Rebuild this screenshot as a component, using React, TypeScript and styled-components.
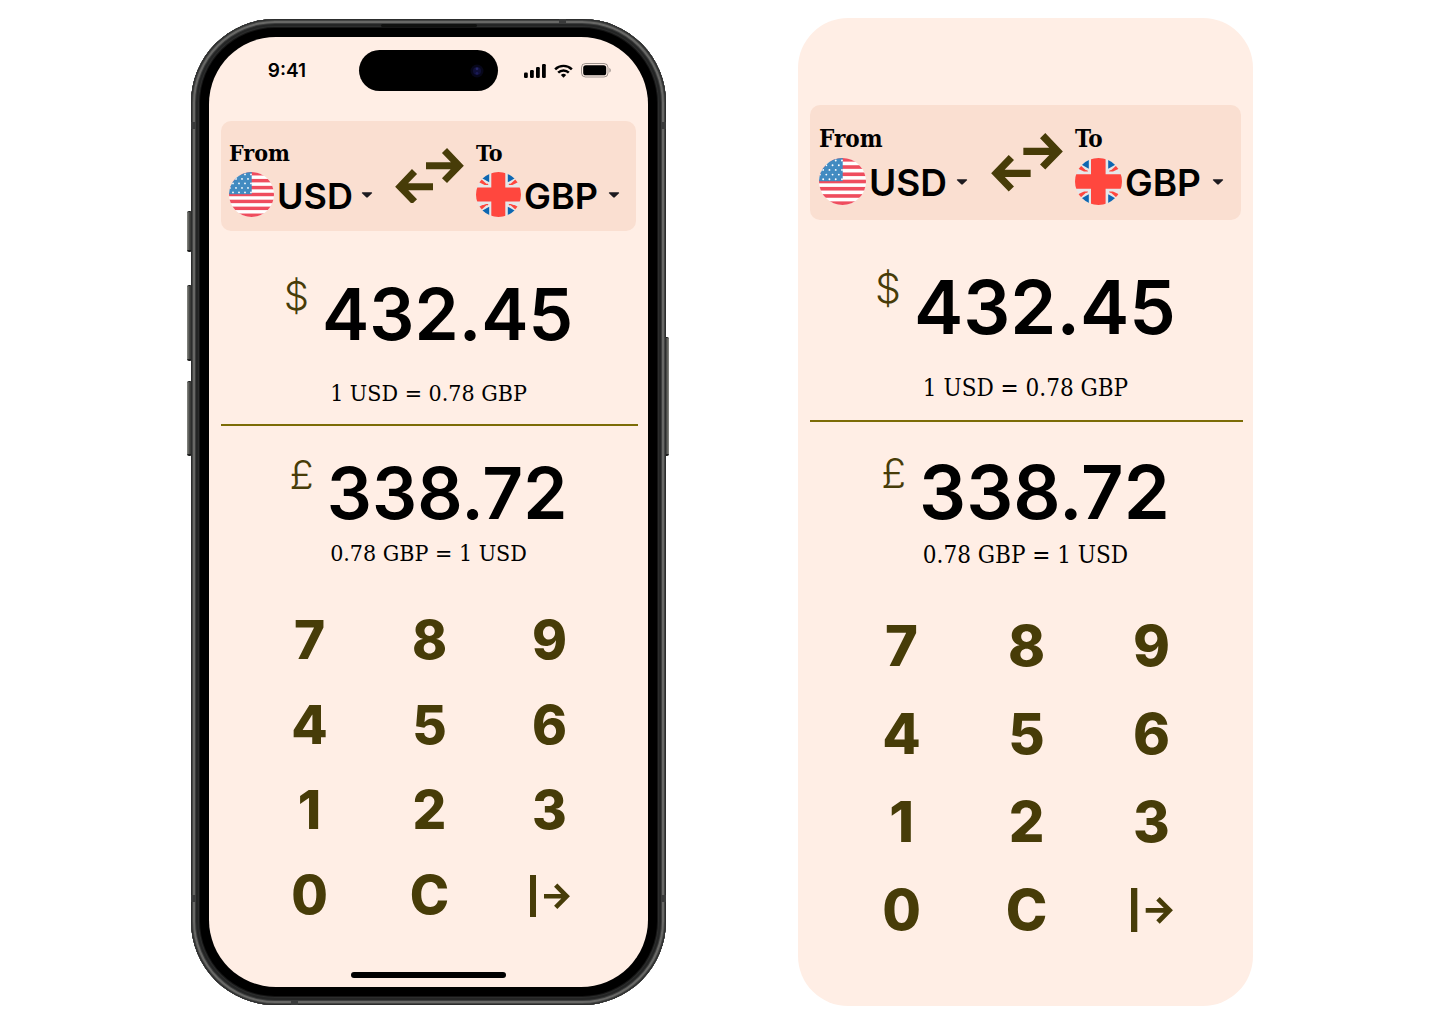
import React, { useId, useState } from 'react';
import styled, { createGlobalStyle, ThemeProvider } from 'styled-components';

const GlobalStyle = createGlobalStyle`
  *, *::before, *::after { box-sizing: border-box; }
  body { margin: 0; background: #fff; }
  button, select { font: inherit; color: inherit; border: 0; padding: 0; margin: 0; background: none; cursor: pointer; }
`;

const ink = '#473c08';
const blush = '#ffeee5';
const sans = `Inter, 'Liberation Sans', sans-serif`;
const slab = `'DejaVu Serif Condensed', 'Liberation Serif', serif`;

const compact = {
  cardPad: '18px 8px 14px',
  flag: 45, field: 144, code: 36, label: 23,
  swap: 69, swapMargin: '0 12px 5px 22px',
  amount: 71, amountLine: 72, symbol: 40, symbolLine: 36,
  rate: 23, rateLine: 28,
  firstTop: 47, firstRate: 29, secondTop: 31, keysTop: 31,
  key: 53, rowHeight: 85, colWidth: 120, exit: 40,
};

const roomy = {
  cardPad: '20px 9px 15px',
  flag: 47, field: 149, code: 37, label: 24,
  swap: 72, swapMargin: '0 12px 5px 23px',
  amount: 74, amountLine: 76, symbol: 41, symbolLine: 38,
  rate: 24, rateLine: 30,
  firstTop: 49, firstRate: 28, secondTop: 32, keysTop: 32,
  key: 56, rowHeight: 88, colWidth: 125, exit: 42,
};

const Page = styled.main`
  min-height: 100vh;
  display: flex;
  flex-wrap: wrap;
  align-items: center;
  justify-content: center;
  gap: 18px 129px;
  font-family: ${sans};
  color: #000;
`;

const Device = styled.div`
  position: relative;
  flex: 0 1 482px;
  padding: 0 3px 0 4px;
`;

const Body = styled.div`
  position: relative;
  padding: 18px;
  border-radius: 84px;
  background: #000;
  box-shadow:
    inset 0 0 0 1px #2c2d2d,
    inset 0 0 0 2px #434443,
    inset 0 0 0 4px #686866,
    inset 0 0 0 5px #3c3d3d,
    inset 0 0 0 7px #242525,
    inset 0 0 0 8px #2c2d2d,
    inset 0 0 0 9px #151515;
`;

const SideButton = styled.span<{ $side: 'left' | 'right'; $top: number; $length: number }>`
  position: absolute;
  ${(p) => p.$side}: 0;
  top: ${(p) => p.$top}px;
  width: 5px;
  height: ${(p) => p.$length}px;
  border-radius: 2px;
  background: linear-gradient(to ${(p) => (p.$side === 'left' ? 'right' : 'left')}, #8b8c86, #3a3b39 60%);
  border: solid #1d1e1d;
  border-width: 1px 0 2px;
`;

const Speaker = styled.span`
  position: absolute;
  top: 5px;
  left: 50%;
  width: 96px;
  height: 3px;
  margin-left: -48px;
  border-radius: 2px;
  background: #101110;
`;

const Antenna = styled.span<{ $place: string }>`
  position: absolute;
  ${(p) => p.$place}
  background: #3a3b3b;
`;

const Screen = styled.div`
  border-radius: 67px;
  background: ${blush};
  display: flex;
  flex-direction: column;
`;

const Panel = styled.div`
  flex: 0 1 455px;
  padding: 87px 0 52px;
  border-radius: 50px;
  background: ${blush};
`;

const StatusBar = styled.header`
  display: grid;
  grid-template-columns: 1fr 139px 1fr;
  align-items: center;
  padding: 13px 0 30px;
`;

const Time = styled.time`
  justify-self: center;
  padding-left: 6px;
  font-size: 19px;
  line-height: 24px;
  font-weight: 600;
`;

const Island = styled.div`
  height: 41px;
  border-radius: 21px;
  background: #000;
  display: flex;
  align-items: center;
  justify-content: flex-end;
  padding-right: 14px;
`;

const Indicators = styled.div`
  display: flex;
  align-items: center;
  gap: 8px;
  padding-left: 26px;
`;

const HomeBar = styled.div`
  width: 155px;
  height: 6px;
  margin: 34px auto 9px;
  border-radius: 3px;
  background: #000;
`;

const Card = styled.section`
  display: flex;
  align-items: center;
  margin: 0 12px;
  padding: ${(p) => p.theme.cardPad};
  border-radius: 10px;
  background: #fadfd1;
`;

const Field = styled.div`
  width: ${(p) => p.theme.field}px;
  display: flex;
  flex-direction: column;
  gap: 5px;
`;

const FieldLabel = styled.label`
  font-family: ${slab};
  font-size: ${(p) => p.theme.label}px;
  line-height: 28px;
  font-weight: 600;
`;

const Picker = styled.div`
  display: flex;
  align-items: center;
  gap: 3px;
`;

const FlagIcon = styled.svg`
  flex: none;
  width: ${(p) => p.theme.flag}px;
  height: ${(p) => p.theme.flag}px;
`;

const SelectBox = styled.div`
  flex: 1;
  display: grid;
  align-items: center;
  & > * { grid-area: 1 / 1; }
  & > svg { justify-self: end; pointer-events: none; }
`;

const Select = styled.select`
  appearance: none;
  width: 100%;
  padding-top: 3px;
  font-size: ${(p) => p.theme.code}px;
  line-height: 42px;
  font-weight: 600;
`;

const SwapButton = styled.button`
  flex: none;
  margin: ${(p) => p.theme.swapMargin};
  display: block;
  & > svg { display: block; width: ${(p) => p.theme.swap}px; }
`;

const AmountRow = styled.div<{ $second?: boolean }>`
  display: flex;
  justify-content: center;
  gap: 13px;
  margin-top: ${(p) => (p.$second ? p.theme.secondTop : p.theme.firstTop)}px;
`;

const Symbol = styled.span`
  font-size: ${(p) => p.theme.symbol}px;
  line-height: ${(p) => p.theme.symbolLine}px;
  font-weight: 300;
  color: ${ink};
`;

const Amount = styled.output`
  font-size: ${(p) => p.theme.amount}px;
  line-height: ${(p) => p.theme.amountLine}px;
  font-weight: 600;
`;

const Rate = styled.p<{ $second?: boolean }>`
  margin: ${(p) => (p.$second ? 10 : p.theme.firstRate)}px 0 0;
  text-align: center;
  font-family: ${slab};
  font-size: ${(p) => p.theme.rate}px;
  line-height: ${(p) => p.theme.rateLine}px;
`;

const Divider = styled.hr`
  height: 2px;
  margin: 17px 10px 0 12px;
  border: 0;
  background: #7c6c06;
`;

const Keypad = styled.div`
  display: grid;
  grid-template-columns: repeat(3, ${(p) => p.theme.colWidth}px);
  grid-auto-rows: ${(p) => p.theme.rowHeight}px;
  justify-content: center;
  margin: ${(p) => p.theme.keysTop}px 0 0 2px;
`;

const Key = styled.button`
  display: grid;
  place-items: center;
  font-size: ${(p) => p.theme.key}px;
  line-height: 1;
  font-weight: 800;
  color: ${ink};
  & > svg { width: ${(p) => p.theme.exit}px; }
`;

const stars: [number, number][] = [];
for (let row = 0; row < 5; row += 1) {
  for (let col = 0; col < 4; col += 1) {
    stars.push([(row % 2 ? 2 : 5) + col * 6 - 1, 2.4 + row * 4.5]);
  }
}

function UsFlag() {
  const clip = useId();
  return (
    <FlagIcon viewBox="0 0 45 45" aria-hidden="true">
      <clipPath id={clip}><circle cx="22.5" cy="22.5" r="22.5" /></clipPath>
      <g clipPath={`url(#${clip})`}>
        <rect width="45" height="45" fill="#fff" />
        {[0, 2, 4, 6, 8, 10, 12].map((n) => (
          <rect key={n} y={(n * 45) / 13} width="45" height={45 / 13} fill="#ef4d5e" />
        ))}
        <rect width="22.7" height="22.2" fill="#428bc1" />
        {stars.map(([x, y]) => <circle key={`${x}-${y}`} cx={x} cy={y} r="0.9" fill="#fff" />)}
      </g>
    </FlagIcon>
  );
}

function UkFlag() {
  const clip = useId();
  return (
    <FlagIcon viewBox="0 0 45 45" aria-hidden="true">
      <clipPath id={clip}><circle cx="22.5" cy="22.5" r="22.5" /></clipPath>
      <g clipPath={`url(#${clip})`}>
        <rect width="45" height="45" fill="#e6e7e8" />
        {['', 'translate(45 0) scale(-1 1)', 'translate(0 45) scale(1 -1)', 'translate(45 45) scale(-1 -1)'].map((t) => (
          <g key={t} transform={t || undefined}>
            <path d="M13.2-1v11.300L5.600 6z" fill="#0d67b1" />
            <path d="M12.500 13H7.500L11.500 11.600zM11.800 12.900H8.600L2 9.800l2.600-3.400z" fill="#ff473e" />
          </g>
        ))}
        <path d="M15.300 0h14v15.500H45v14H29.300V45h-14V29.500H0v-14h15.300z" fill="#ff473e" />
      </g>
    </FlagIcon>
  );
}

const Caret = () => (
  <svg width="12" height="6" viewBox="0 0 12 6" aria-hidden="true">
    <path d="M1.500 0.300h9c.6 0 .9.600.500 1L6.800 5.300a1.100 1.100 0 0 1-1.600 0L1 1.300C.600.900.900.300 1.500.300z" fill="#1d1b20" />
  </svg>
);

const SwapIcon = () => (
  <svg viewBox="0 0 207 167" fill="none" stroke={ink} strokeWidth="21" aria-hidden="true">
    <path d="M93 53h96M148.500 7.500L192 53l-43.500 45" />
    <path d="M114 116H18M58.500 70.500L15 116l43.500 45" />
  </svg>
);

const ExitIcon = () => (
  <svg viewBox="0 0 40 42" fill="none" stroke={ink} aria-hidden="true">
    <path d="M3 0v42" strokeWidth="6" />
    <path d="M14 21.300h22M25.700 10.200l11 11.100-11 11.100" strokeWidth="4.600" />
  </svg>
);

const SignalIcon = () => (
  <svg width="22" height="14" viewBox="0 0 22 14" aria-hidden="true">
    <rect x="0" y="8.500" width="3.800" height="5.500" rx="1.200" />
    <rect x="6" y="6" width="3.800" height="8" rx="1.200" />
    <rect x="12" y="3" width="3.800" height="11" rx="1.200" />
    <rect x="18" y="0" width="3.800" height="14" rx="1.200" />
  </svg>
);

const WifiIcon = () => (
  <svg width="19" height="14" viewBox="0 0 20 14" fill="none" stroke="#000" strokeWidth="2.600" aria-hidden="true">
    <path d="M1.200 5.200a12.600 12.600 0 0 1 17.600 0" />
    <path d="M4.400 8.700a8 8 0 0 1 11.200 0" />
    <path d="M10 14L7.200 11.200a4 4 0 0 1 5.600 0z" fill="#000" stroke="none" />
  </svg>
);

const BatteryIcon = () => (
  <svg width="30" height="15" viewBox="0 0 30 15" aria-hidden="true">
    <rect x="0.500" y="0.500" width="26.500" height="13.500" rx="4" fill="none" stroke="#000" strokeOpacity="0.380" />
    <rect x="2.200" y="2.200" width="23" height="10.100" rx="2.600" />
    <path d="M28.400 5v4.600c1.800-.700 1.800-3.900 0-4.600z" fillOpacity="0.400" />
  </svg>
);

const CameraIcon = () => (
  <svg width="14" height="14" viewBox="0 0 14 14" aria-hidden="true">
    <circle cx="7" cy="7" r="6.500" fill="#07071a" />
    <circle cx="7" cy="7" r="4" fill="#101038" />
    <circle cx="7" cy="4.800" r="1.400" fill="#252568" />
    <circle cx="7" cy="9.300" r="1.400" fill="#1b1b58" />
  </svg>
);

function CurrencyField({ label, value, onChange }: { label: string; value: string; onChange: (v: string) => void }) {
  const id = useId();
  return (
    <Field>
      <FieldLabel htmlFor={id}>{label}</FieldLabel>
      <Picker>
        {value === 'USD' ? <UsFlag /> : <UkFlag />}
        <SelectBox>
          <Select id={id} value={value} onChange={(e) => onChange(e.target.value)}>
            <option>USD</option>
            <option>GBP</option>
          </Select>
          <Caret />
        </SelectBox>
      </Picker>
    </Field>
  );
}

const keys = ['7', '8', '9', '4', '5', '6', '1', '2', '3', '0', 'C'];

function Converter() {
  const [from, setFrom] = useState('USD');
  const [to, setTo] = useState('GBP');
  const swap = () => { setFrom(to); setTo(from); };
  return (
    <>
      <Card>
        <CurrencyField label="From" value={from} onChange={setFrom} />
        <SwapButton type="button" aria-label="Swap currencies" onClick={swap}><SwapIcon /></SwapButton>
        <CurrencyField label="To" value={to} onChange={setTo} />
      </Card>
      <AmountRow>
        <Symbol>$</Symbol>
        <Amount>432.45</Amount>
      </AmountRow>
      <Rate>1 USD = 0.78 GBP</Rate>
      <Divider />
      <AmountRow $second>
        <Symbol>£</Symbol>
        <Amount>338.72</Amount>
      </AmountRow>
      <Rate $second>0.78 GBP = 1 USD</Rate>
      <Keypad>
        {keys.map((k) => <Key key={k} type="button">{k}</Key>)}
        <Key type="button" aria-label="Next"><ExitIcon /></Key>
      </Keypad>
    </>
  );
}

export default function App() {
  return (
    <Page>
      <GlobalStyle />
      <ThemeProvider theme={compact}>
        <Device>
          <SideButton $side="left" $top={192} $length={41} />
          <SideButton $side="left" $top={266} $length={76} />
          <SideButton $side="left" $top={362} $length={75} />
          <SideButton $side="right" $top={318} $length={119} />
          <Body>
            <Speaker />
            <Antenna $place="top: 0; right: 100px; width: 7px; height: 5px;" />
            <Antenna $place="bottom: 0; left: 100px; width: 7px; height: 5px;" />
            <Antenna $place="top: 103px; left: 0; width: 5px; height: 7px;" />
            <Antenna $place="top: 103px; right: 0; width: 5px; height: 7px;" />
            <Antenna $place="bottom: 103px; left: 0; width: 5px; height: 7px;" />
            <Antenna $place="bottom: 103px; right: 0; width: 5px; height: 7px;" />
            <Screen>
              <StatusBar>
                <Time>9:41</Time>
                <Island><CameraIcon /></Island>
                <Indicators>
                  <SignalIcon />
                  <WifiIcon />
                  <BatteryIcon />
                </Indicators>
              </StatusBar>
              <Converter />
              <HomeBar />
            </Screen>
          </Body>
        </Device>
      </ThemeProvider>
      <ThemeProvider theme={roomy}>
        <Panel><Converter /></Panel>
      </ThemeProvider>
    </Page>
  );
}
